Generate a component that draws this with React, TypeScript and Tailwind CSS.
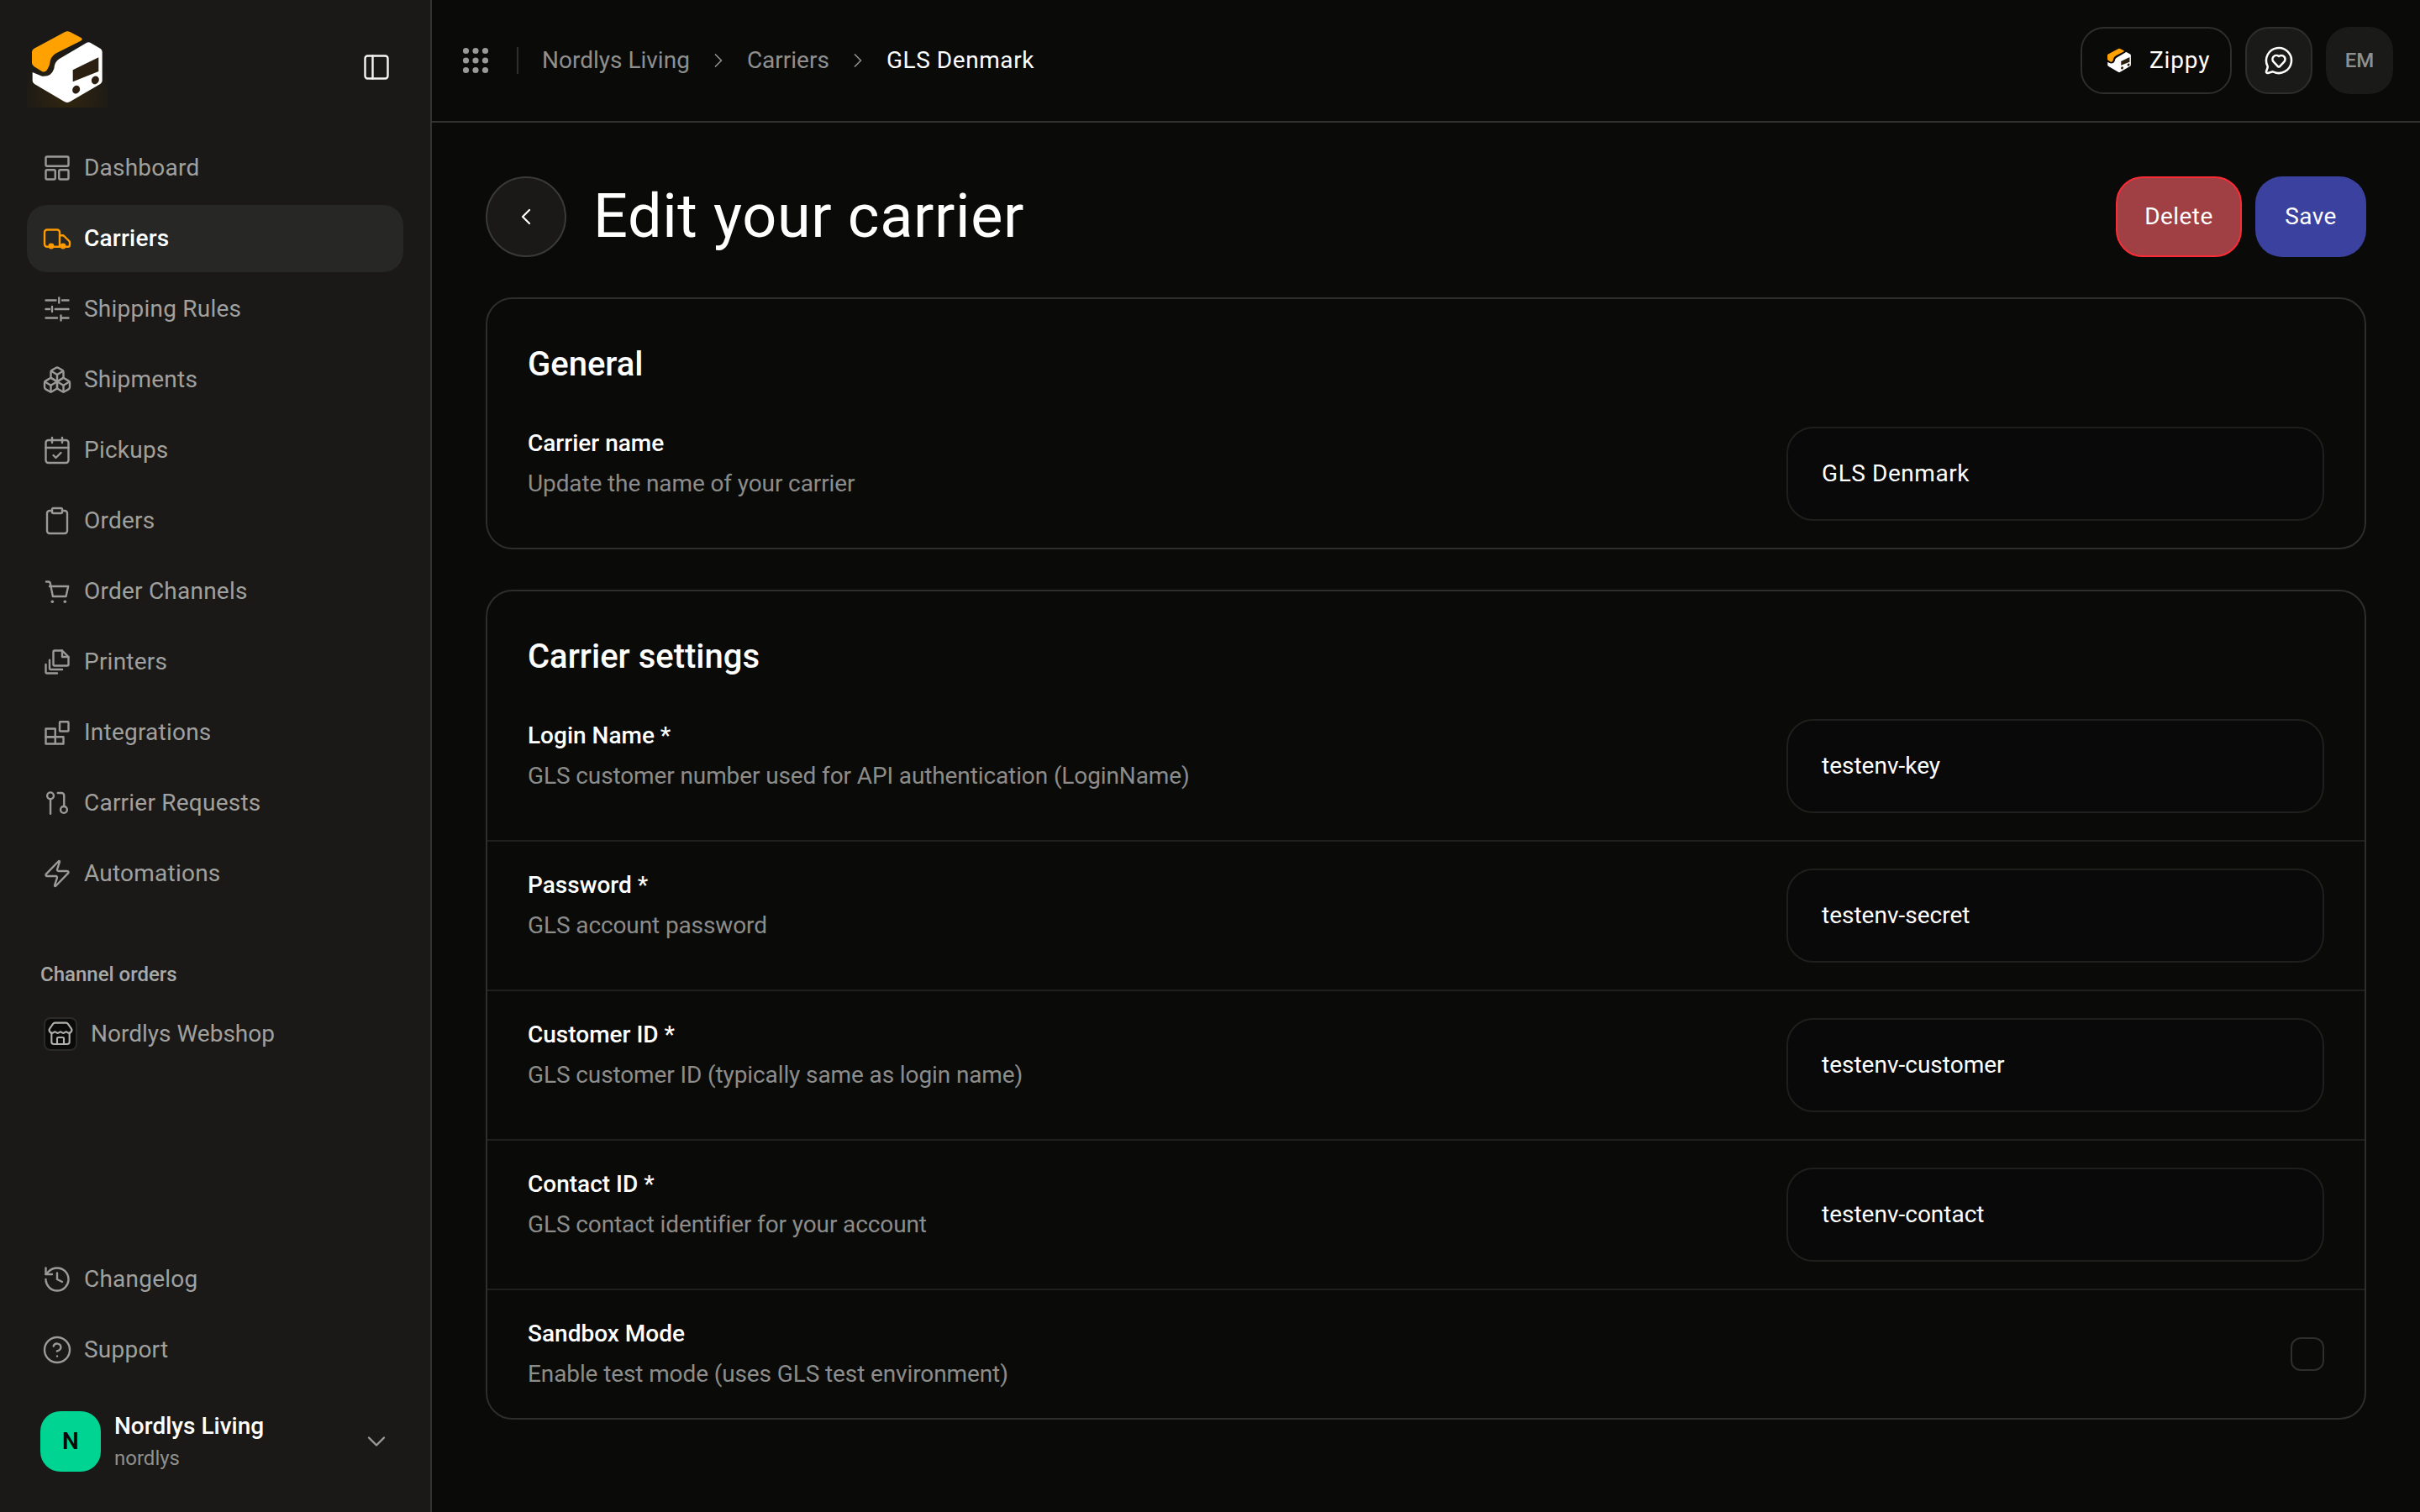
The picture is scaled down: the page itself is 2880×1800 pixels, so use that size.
import {
  Boxes,
  CalendarCheck,
  ChevronDown,
  ChevronLeft,
  ChevronRight,
  CircleHelp,
  Clipboard,
  History,
  MessageCircleHeart,
  PanelLeft,
  Store,
  Zap,
} from "lucide-react";
import type { ReactNode } from "react";

const IconBase = ({ children, className = "" }: { children: ReactNode; className?: string }) => (
  <svg
    viewBox="0 0 24 24"
    fill="none"
    stroke="currentColor"
    strokeWidth={1.6}
    strokeLinecap="round"
    strokeLinejoin="round"
    className={`w-9 h-9 shrink-0 ${className}`}
  >
    {children}
  </svg>
);

const DashboardIcon = () => (
  <IconBase>
    <rect x="3" y="3" width="18" height="7.5" rx="1" />
    <rect x="3" y="13.5" width="7.5" height="7.5" rx="1" />
    <rect x="13.5" y="13.5" width="7.5" height="7.5" rx="1" />
  </IconBase>
);

const TruckIcon = () => (
  <IconBase>
    <path d="M5 18.5H4a2 2 0 0 1-2-2V7a2 2 0 0 1 2-2h8a2 2 0 0 1 2 2v11.5" />
    <path d="M14 9.5h2.5a1.5 1.5 0 0 1 1 .5l4 4a1.5 1.5 0 0 1 .5 1v2a1.5 1.5 0 0 1-1 1.5H19" />
    <path d="M9 18.5h6" />
    <circle cx="7.3" cy="18" r="2.3" fill="currentColor" stroke="none" />
    <circle cx="16.7" cy="18" r="2.3" fill="currentColor" stroke="none" />
  </IconBase>
);

const SlidersIcon = () => (
  <IconBase>
    <path d="M3 5h8M16 5h5M13.5 3v4" />
    <path d="M3 12h3M10.5 12H21M8 10v4" />
    <path d="M3 19h9M15 19h6M15 17v4" />
  </IconBase>
);

const CartIcon = () => (
  <IconBase>
    <path d="M3.3 4.3H5a1.5 1.5 0 0 1 1.5 1.2L8.6 16H19l1.8-8H6" />
    <circle cx="8.2" cy="20.2" r="1.2" fill="currentColor" stroke="none" />
    <circle cx="18.2" cy="20.2" r="1.2" fill="currentColor" stroke="none" />
  </IconBase>
);

const PrintersIcon = () => (
  <IconBase>
    <path d="M9 4a1 1 0 0 1 1-1h6l5 5v6a1 1 0 0 1-1 1H10a1 1 0 0 1-1-1z" />
    <path d="M16 3v5h5" />
    <path d="M6 10.5V17a1 1 0 0 0 1 1h9" />
    <path d="M3 14v6a1 1 0 0 0 1 1h8" />
  </IconBase>
);

const IntegrationsIcon = () => (
  <IconBase>
    <rect x="14" y="3.5" width="7" height="7.5" rx="0.5" />
    <path d="M3 9h7.5v6.5H3z" />
    <path d="M3 15.5h14V21H3zM10.5 15.5V21" />
  </IconBase>
);

const RequestsIcon = () => (
  <IconBase>
    <circle cx="6.7" cy="6.2" r="2.6" />
    <path d="M6.7 8.8v11.7" />
    <circle cx="17.3" cy="17.3" r="2.6" />
    <path d="M12.5 4h3a2 2 0 0 1 2 2v8.7" />
  </IconBase>
);

const Logo = ({ className, glow }: { className: string; glow?: boolean }) => (
  <svg viewBox="36 36 288 288" className={className}>
    {glow && (
      <>
        <defs>
          <radialGradient id="logo-glow" cx="50%" cy="85%" r="60%">
            <stop offset="0%" stopColor="#33260f" />
            <stop offset="100%" stopColor="#1a1917" />
          </radialGradient>
        </defs>
        <rect x="36" y="36" width="288" height="288" fill="url(#logo-glow)" />
      </>
    )}
    <path
      d="M172 54Q180 50 190 54L230 75Q237 81 228 86L150 125Q125 136 120 155Q118 175 108 190Q100 200 90 195L62 178Q54 172 54 165V125Q54 118 62 113Z"
      fill="#ffa100"
    />
    <path
      d="M250 92Q256 89 262 92L298 113Q305 117 305 125V228Q305 236 298 240L190 303Q180 309 170 303L63 240Q56 236 56 228V198L90 212Q122 216 133 185Q135 160 152 150Z"
      fill="#fff"
    />
    <path d="M200 190L292 145V195L200 232Z" fill="#2a1f10" />
    <ellipse cx="212" cy="260" rx="13" ry="15" transform="rotate(30 212 260)" fill="#2a1f10" />
    <ellipse cx="280" cy="226" rx="13" ry="15" transform="rotate(30 280 226)" fill="#2a1f10" />
  </svg>
);

const navItems = [
  { label: "Dashboard", icon: <DashboardIcon /> },
  { label: "Carriers", icon: <TruckIcon />, active: true },
  { label: "Shipping Rules", icon: <SlidersIcon /> },
  { label: "Shipments", icon: <Boxes size={36} strokeWidth={1.6} /> },
  { label: "Pickups", icon: <CalendarCheck size={36} strokeWidth={1.6} /> },
  { label: "Orders", icon: <Clipboard size={36} strokeWidth={1.6} /> },
  { label: "Order Channels", icon: <CartIcon /> },
  { label: "Printers", icon: <PrintersIcon /> },
  { label: "Integrations", icon: <IntegrationsIcon /> },
  { label: "Carrier Requests", icon: <RequestsIcon /> },
  { label: "Automations", icon: <Zap size={36} strokeWidth={1.6} /> },
];

const NavItem = ({ label, icon, active }: { label: string; icon: ReactNode; active?: boolean }) => (
  <div
    className={`flex items-center gap-3.5 h-20 pl-[18px] rounded-3xl text-[28px] tracking-[0.008em] ${
      active ? "bg-[#272726] text-white font-medium" : "text-[#a0a09e]"
    }`}
  >
    <span className={active ? "flex text-[#fe9a00]" : "flex text-[#9a9a98]"}>{icon}</span>
    <span>{label}</span>
  </div>
);

const Sidebar = () => (
  <aside className="w-[514px] shrink-0 h-full flex flex-col bg-[#1a1917] border-r-2 border-[#333331] px-8 pb-[46px]">
    <div className="flex items-start justify-between pt-8 h-[160px] pr-[14px]">
      <Logo className="w-24 h-24" glow />
      <PanelLeft size={36} strokeWidth={1.6} className="text-[#f5f5f5] mt-[30px]" />
    </div>
    <nav className="flex flex-col gap-1">
      {navItems.map((item) => (
        <NavItem key={item.label} {...item} />
      ))}
    </nav>
    <div className="mt-16 pl-4 text-2xl leading-8 font-medium text-[#a8a8a6]">Channel orders</div>
    <div className="mt-[15px] h-20 pl-5 flex items-center gap-4 text-[28px] text-[#a0a09e]">
      <span className="w-10 h-10 flex items-center justify-center rounded-lg bg-[#0a0a0a] border-2 border-[#2a2a28]">
        <Store size={32} strokeWidth={1.6} className="text-[#b0b0ae]" />
      </span>
      Nordlys Webshop
    </div>
    <div className="mt-auto flex flex-col gap-1">
      <NavItem label="Changelog" icon={<History size={36} strokeWidth={1.6} />} />
      <NavItem label="Support" icon={<CircleHelp size={36} strokeWidth={1.6} />} />
    </div>
    <div className="mt-[31px] pl-4 pr-[14px] flex items-center gap-4">
      <div className="w-[72px] h-[72px] rounded-3xl bg-[#00d492] flex items-center justify-center text-[28px] font-semibold text-[#0a0a0a]">
        N
      </div>
      <div className="flex-1">
        <div className="text-[28px] leading-10 font-medium text-white">Nordlys Living</div>
        <div className="text-2xl leading-9 text-[#8f8f8d]">nordlys</div>
      </div>
      <ChevronDown size={36} strokeWidth={1.6} className="text-[#9a9a98]" />
    </div>
  </aside>
);

const Header = () => (
  <header className="h-[146px] shrink-0 flex items-center justify-between border-b-2 border-[#333331] pl-[34px] pr-8">
    <div className="flex items-center text-[28px] text-[#8f8f8d]">
      <svg viewBox="0 0 36 36" className="w-9 h-9 fill-[#9a9a98]">
        {[6.5, 18, 29.5].map((cy) =>
          [6.5, 18, 29.5].map((cx) => <circle key={`${cx}-${cy}`} cx={cx} cy={cy} r="3.6" />)
        )}
      </svg>
      <span className="w-0.5 h-8 bg-[#2e2e2c] ml-[31px] mr-7" />
      <div className="flex items-center gap-5">
        <span>Nordlys Living</span>
        <ChevronRight size={28} strokeWidth={1.5} />
        <span>Carriers</span>
        <ChevronRight size={28} strokeWidth={1.5} />
        <span className="text-white tracking-[0.02em]">GLS Denmark</span>
      </div>
    </div>
    <div className="flex items-center gap-4">
      <div className="w-[180px] h-20 flex items-center gap-5 pl-7 rounded-[28px] border-2 border-[#2e2e2c] text-[28px] tracking-[0.03em] text-white">
        <Logo className="w-8 h-8" />
        Zippy
      </div>
      <div className="w-20 h-20 flex items-center justify-center rounded-[28px] bg-[#1a1a19] border-2 border-[#2e2e2c] text-white">
        <MessageCircleHeart size={36} strokeWidth={1.7} />
      </div>
      <div className="w-20 h-20 flex items-center justify-center rounded-[28px] bg-[#1a1a19] text-2xl font-medium text-[#8f8f8d]">
        EM
      </div>
    </div>
  </header>
);

const Row = ({
  label,
  description,
  value,
  checkbox,
}: {
  label: string;
  description: string;
  value?: ReactNode;
  checkbox?: boolean;
}) => (
  <div className="flex justify-between px-12 py-8 border-b-2 border-[#1f1f1d] last:border-b-0">
    <div>
      <div className="text-[28px] leading-10 font-medium text-white">{label}</div>
      <div className="mt-2 text-[28px] leading-10 tracking-[-0.004em] text-[#8c8c8a]">{description}</div>
    </div>
    {checkbox ? (
      <div className="self-center w-10 h-10 rounded-xl border-2 border-[#2e2e2c]" />
    ) : (
      <div className="w-[640px] h-28 flex items-center px-10 rounded-[32px] bg-[#090909] border-2 border-[#1f1f1d] text-[28px] text-white">
        {value}
      </div>
    )}
  </div>
);

const Card = ({ title, children }: { title: string; children: ReactNode }) => (
  <section className="rounded-[32px] border-2 border-[#2e2e2c] pt-12">
    <h2 className="px-12 pt-0.5 mb-3.5 text-[40px] leading-14 font-medium text-white">{title}</h2>
    {children}
  </section>
);

export default function App() {
  return (
    <div className="h-screen flex overflow-hidden bg-[#0a0a08] font-['Roboto',sans-serif]">
      <Sidebar />
      <main className="flex-1 flex flex-col min-w-0">
        <Header />
        <div className="px-16 pt-16">
          <div className="flex items-center justify-between mb-12">
            <div className="flex items-center gap-8">
              <button className="w-24 h-24 rounded-full flex items-center justify-center bg-[#1a1917] border-2 border-[#3a3a38] text-white">
                <ChevronLeft size={32} strokeWidth={1.6} />
              </button>
              <h1 className="text-[72px] leading-24 tracking-[0.009em] text-white">Edit your carrier</h1>
            </div>
            <div className="flex gap-4 text-[28px] tracking-[0.015em] text-white">
              <button className="h-24 w-[150px] rounded-[32px] bg-[#a04044] border-2 border-[#fb2c36]">Delete</button>
              <button className="h-24 w-[132px] rounded-[32px] bg-[#3b419e]">Save</button>
            </div>
          </div>
          <div className="flex flex-col gap-12">
            <Card title="General">
              <Row
                label="Carrier name"
                description="Update the name of your carrier"
                value={<span className="tracking-[0.02em]">GLS Denmark</span>}
              />
            </Card>
            <Card title="Carrier settings">
              <Row
                label="Login Name *"
                description="GLS customer number used for API authentication (LoginName)"
                value="testenv-key"
              />
              <Row label="Password *" description="GLS account password" value="testenv-secret" />
              <Row
                label="Customer ID *"
                description="GLS customer ID (typically same as login name)"
                value="testenv-customer"
              />
              <Row label="Contact ID *" description="GLS contact identifier for your account" value="testenv-contact" />
              <Row label="Sandbox Mode" description="Enable test mode (uses GLS test environment)" checkbox />
            </Card>
          </div>
        </div>
      </main>
    </div>
  );
}
